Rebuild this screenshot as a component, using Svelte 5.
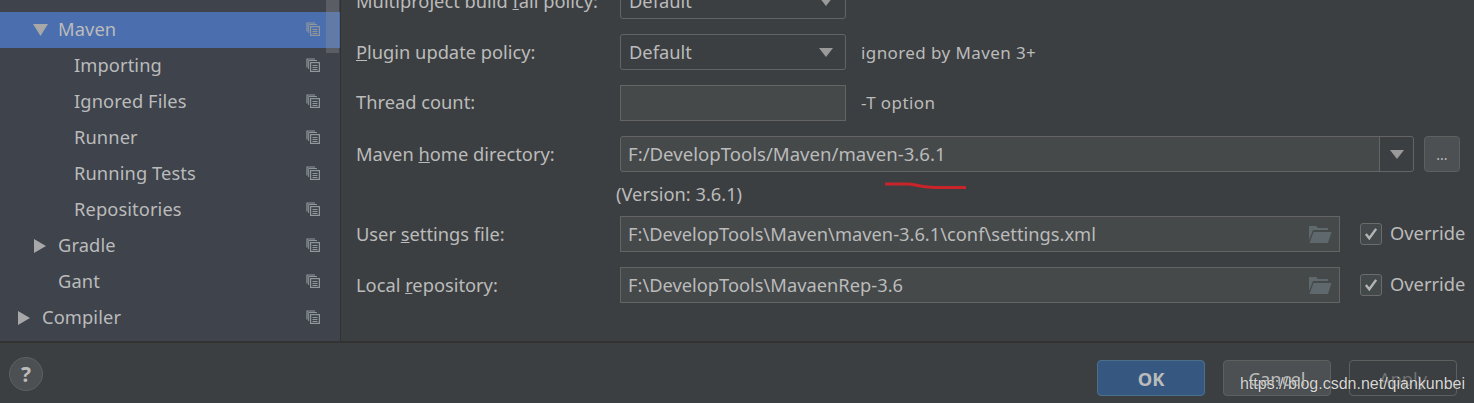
<script>
  const tree = [
    { label: 'Maven', level: 1, arrow: 'down', selected: true },
    { label: 'Importing', level: 2 },
    { label: 'Ignored Files', level: 2 },
    { label: 'Runner', level: 2 },
    { label: 'Running Tests', level: 2 },
    { label: 'Repositories', level: 2 },
    { label: 'Gradle', level: 1, arrow: 'right' },
    { label: 'Gant', level: 1 },
    { label: 'Compiler', level: 0, arrow: 'right' }
  ];
</script>

{#snippet caret()}
  <svg class="caret" width="14" height="9" viewBox="0 0 14 9"><path d="M0 0H14L7 9Z" /></svg>
{/snippet}

{#snippet folder()}
  <svg class="folder" width="24" height="20" viewBox="0 0 24 20">
    <path d="M1 2H8L10 4H20V6H5L1 16Z" fill="#5f686c" />
    <path d="M5.500 8H23.500L20 19H1.500Z" fill="#5f686c" />
  </svg>
{/snippet}

{#snippet check()}
  <span class="check">
    <svg width="14" height="12" viewBox="0 0 16 14"><path d="M2 7L6 12L14 1" fill="none" stroke="#b4b4b4" stroke-width="2.800" /></svg>
  </span>
{/snippet}

<div class="window">
  <div class="body">
    <aside class="side">
      {#each tree as item}
        <div class="node" class:selected={item.selected} style="padding-left:{item.level * 16 + 18}px">
          <span class="slot">
            {#if item.arrow === 'down'}
              <svg class="down" width="15" height="12" viewBox="0 0 15 12"><path d="M0 0H15L7.500 12Z" fill="#a8a8a8" /></svg>
            {:else if item.arrow === 'right'}
              <svg width="12" height="14" viewBox="0 0 12 14"><path d="M0 0L12 7L0 14Z" fill="#a8a8a8" /></svg>
            {/if}
          </span>
          <span class="name">{item.label}</span>
          <svg class="copy" width="14" height="14" viewBox="0 0 14 14" fill="none" stroke="#8f979b" stroke-width="1.200">
            <path d="M9 1H1V9.500" />
            <path d="M11 2.500H2.700V11" stroke-width="1" />
            <rect x="4.600" y="4.600" width="8.800" height="8.800" />
            <path d="M6.500 7.500H11.500M6.500 9.500H11.500M6.500 11.500H11.500" stroke-width="1" />
          </svg>
        </div>
      {/each}
      <div class="thumb"></div>
    </aside>

    <main class="form">
      <div class="row">
        <div class="label">Multiproject build <u>f</u>ail policy:</div>
        <div class="combo"><span class="value">Default</span>{@render caret()}</div>
      </div>
      <div class="row">
        <div class="label"><u>P</u>lugin update policy:</div>
        <div class="combo"><span class="value">Default</span>{@render caret()}</div>
        <div class="hint">ignored by Maven 3+</div>
      </div>
      <div class="row lifted">
        <div class="label">Thread count:</div>
        <div class="input short"></div>
        <div class="hint">-T option</div>
      </div>
      <div class="row tight">
        <div class="label">Maven <u>h</u>ome directory:</div>
        <div class="homefield">
          <span class="value home">F:/DevelopTools/Maven/maven-3.6.1</span>
          <span class="drop">{@render caret()}</span>
          <svg class="scribble" width="84" height="8" viewBox="0 0 84 8"><path d="M1 2H24C30 2 32 4 44 5C52 6 60 5.500 82 5.500" fill="none" stroke="#c8242a" stroke-width="3" /></svg>
        </div>
        <div class="more">...</div>
      </div>
      <div class="version">(Version: 3.6.1)</div>
      <div class="row">
        <div class="label">User <u>s</u>ettings file:</div>
        <div class="input wide"><span class="value">F:\DevelopTools\Maven\maven-3.6.1\conf\settings.xml</span>{@render folder()}</div>
        {@render check()}
        <span class="override">Override</span>
      </div>
      <div class="row">
        <div class="label">Local <u>r</u>epository:</div>
        <div class="input wide"><span class="value">F:\DevelopTools\MavaenRep-3.6</span>{@render folder()}</div>
        {@render check()}
        <span class="override">Override</span>
      </div>
    </main>
  </div>

  <footer class="foot">
    <div class="help">?</div>
    <div class="buttons">
      <div class="btn ok">OK</div>
      <div class="btn cancel">Cancel</div>
      <div class="btn apply">Apply</div>
    </div>
    <div class="mark">https://blog.csdn.net/qiankunbei</div>
  </footer>
</div>

<style>
  :global(body) {
    margin: 0;
    background: #3c3f41;
  }
  .window {
    width: 1474px;
    height: 403px;
    overflow: hidden;
    display: flex;
    flex-direction: column;
    background: #3c3f41;
    color: #bbbbbb;
    font-family: "Noto Sans", sans-serif;
    font-size: 18.3px;
  }
  .body {
    height: 341px;
    display: flex;
    overflow: hidden;
  }
  .side {
    position: relative;
    width: 341px;
    flex: none;
    box-sizing: border-box;
    padding-top: 12px;
    background: #3e434c;
    border-right: 1px solid #323232;
  }
  .node {
    height: 36px;
    box-sizing: border-box;
    display: flex;
    align-items: center;
    padding-right: 20px;
    padding-bottom: 2px;
  }
  .node.selected {
    background: #4b6eaf;
  }
  .slot {
    width: 24px;
    flex: none;
    display: flex;
    align-items: center;
    padding-top: 2px;
  }
  .slot svg {
    display: block;
  }
  .slot .down {
    margin-left: -1px;
  }
  .name {
    flex: 1;
    letter-spacing: 0.1px;
    padding-bottom: 2px;
  }
  .copy {
    flex: none;
  }
  .thumb {
    position: absolute;
    top: 0;
    right: 1px;
    width: 13px;
    height: 53px;
    background: rgba(150, 150, 150, 0.32);
  }
  .form {
    flex: 1;
    margin-top: -17px;
    padding-left: 15px;
    min-width: 0;
  }
  .row {
    height: 36px;
    margin-bottom: 15px;
    display: flex;
    align-items: center;
  }
  .row.tight {
    margin-bottom: 0;
  }
  .label,
  .value {
    padding-bottom: 2px;
  }
  .row.lifted .label {
    padding-bottom: 4px;
  }
  .row.lifted .hint {
    padding-bottom: 2px;
  }
  .label {
    width: 264px;
    flex: none;
  }
  .combo {
    width: 226px;
    height: 36px;
    box-sizing: border-box;
    flex: none;
    display: flex;
    align-items: center;
    justify-content: space-between;
    padding: 0 12px 0 8px;
    border: 1px solid #646464;
    border-radius: 3px;
  }
  .caret path {
    fill: #9a9a9a;
  }
  .hint {
    margin-left: 15px;
    font-size: 17px;
    letter-spacing: 0.4px;
  }
  .input {
    height: 36px;
    box-sizing: border-box;
    flex: none;
    display: flex;
    align-items: center;
    justify-content: space-between;
    padding: 0 7px 0 7px;
    background: #45494a;
    border: 1px solid #646464;
  }
  .short {
    width: 226px;
  }
  .wide {
    width: 720px;
  }
  .homefield {
    position: relative;
    width: 794px;
    height: 36px;
    box-sizing: border-box;
    flex: none;
    display: flex;
    align-items: center;
    justify-content: space-between;
    padding-left: 7px;
    background: #45494a;
    border: 1px solid #646464;
    border-radius: 3px;
  }
  .home {
    font-size: 18.600px;
  }
  .drop {
    width: 33px;
    height: 100%;
    display: flex;
    align-items: center;
    justify-content: center;
    background: #3c3f41;
    border-left: 1px solid #646464;
    border-radius: 0 3px 3px 0;
  }
  .scribble {
    position: absolute;
    left: 263px;
    top: 45px;
  }
  .more {
    width: 36px;
    height: 36px;
    margin-left: 10px;
    flex: none;
    box-sizing: border-box;
    display: flex;
    align-items: center;
    justify-content: center;
    background: #4c5052;
    border: 1px solid #5e6060;
    border-radius: 4px;
    font-size: 14px;
  }
  .version {
    height: 44px;
    line-height: 44px;
    margin-left: 260px;
  }
  .check {
    width: 20px;
    height: 20px;
    margin-left: 20px;
    flex: none;
    display: flex;
    align-items: center;
    justify-content: center;
    background: #43494a;
    border: 1px solid #6b6b6b;
    border-radius: 3px;
  }
  .override {
    margin-left: 8px;
    padding-bottom: 4px;
    white-space: nowrap;
  }
  .foot {
    position: relative;
    flex: 1;
    display: flex;
    align-items: center;
    justify-content: space-between;
    padding: 0 14px 0 9px;
    border-top: 2px solid #323232;
  }
  .help {
    width: 34px;
    height: 34px;
    box-sizing: border-box;
    margin-top: 2px;
    display: flex;
    align-items: center;
    justify-content: center;
    border-radius: 50%;
    background: #4c5052;
    border: 1px solid #5e6060;
    font-weight: 700;
    font-size: 21px;
  }
  .buttons {
    display: flex;
    gap: 18px;
    margin-top: 10px;
    margin-right: 3px;
  }
  .btn {
    width: 108px;
    height: 36px;
    box-sizing: border-box;
    display: flex;
    align-items: center;
    justify-content: center;
    border: 1px solid #5e6060;
    border-radius: 4px;
  }
  .ok {
    background: #365880;
    border-color: #4c708c;
    font-weight: 700;
  }
  .cancel {
    background: #4c5052;
  }
  .apply {
    color: #6f7173;
  }
  .mark {
    position: absolute;
    right: 9px;
    bottom: 10px;
    font-family: "Liberation Sans", sans-serif;
    font-size: 16px;
    color: #d8d8d8;
    text-shadow: 0 0 1px #222;
  }
</style>
